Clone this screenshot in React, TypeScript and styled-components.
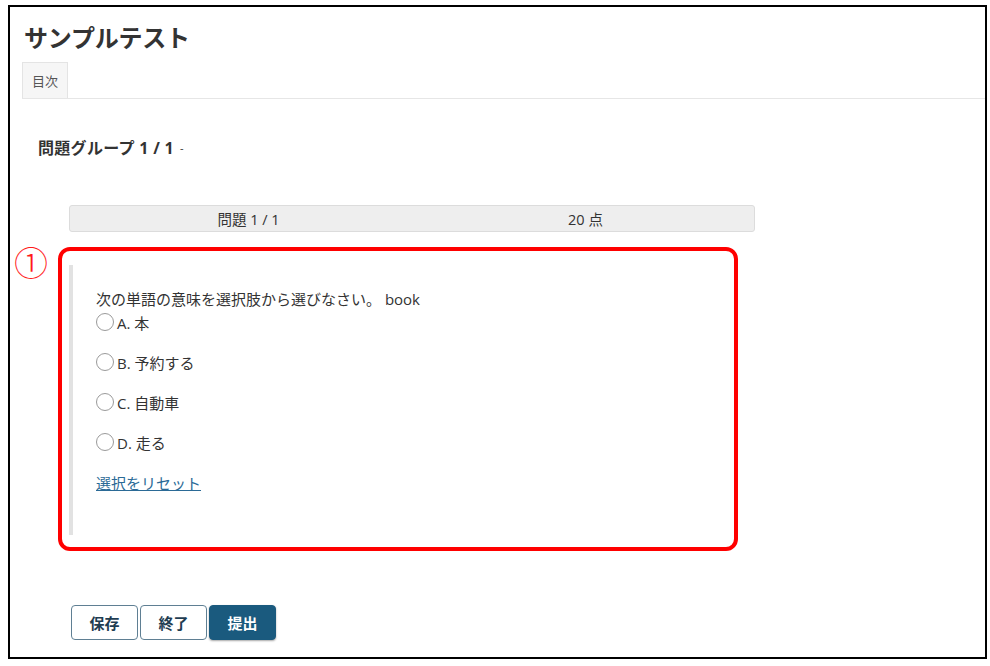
import React from "react";
import styled, { createGlobalStyle } from "styled-components";

const GlobalStyle = createGlobalStyle`
  html, body { margin: 0; padding: 0; background: #fff; }
  body {
    font-family: "Open Sans", "Noto Sans CJK JP", sans-serif;
    color: #333;
  }
  * { box-sizing: border-box; }
`;

const Frame = styled.div`
  margin: 5px 0 0 8px;
  width: 979px;
  height: 654px;
  border: 2px solid #000;
  display: flex;
  flex-direction: column;
  overflow: hidden;
`;

const Title = styled.h1`
  margin: 16px 0 0 14px;
  height: 30px;
  font-size: 24px;
  line-height: 30px;
  font-weight: 700;
  color: #333;
  letter-spacing: -0.2px;
`;

const TabBar = styled.div`
  margin: 9px 0 0 12px;
  display: flex;
  border-bottom: 1px solid #e6e6e6;
`;

const Tab = styled.div`
  height: 36px;
  padding: 0 9px;
  display: flex;
  align-items: center;
  font-size: 13px;
  color: #555;
  background: #f6f6f6;
  border: 1px solid #e4e4e4;
  border-bottom: none;
`;

const GroupHeading = styled.h2`
  margin: 38px 0 0 28px;
  height: 20px;
  display: flex;
  align-items: center;
  font-size: 16px;
  font-weight: 700;
  color: #333;
  letter-spacing: 0.3px;
`;

const Dash = styled.span`
  font-weight: 400;
  font-size: 11px;
  margin-left: 6px;
`;

const QuestionHeader = styled.div`
  margin: 48px 0 0 59px;
  width: 686px;
  height: 27px;
  flex: none;
  display: flex;
  align-items: center;
  padding-left: 10px;
  background: #eeeeee;
  border: 1px solid #dcdcdc;
  border-radius: 3px;
  font-size: 14.5px;
  color: #333;
`;

const HeaderCell = styled.div`
  flex: 1;
  text-align: center;
`;

const AnnotatedRow = styled.div`
  margin-top: 15px;
  display: flex;
  align-items: flex-start;
  flex: none;
`;

const Marker = styled.div`
  width: 48px;
  height: 30px;
  padding-left: 4px;
  display: flex;
  align-items: center;
  font-family: "Noto Sans CJK JP", "DejaVu Serif", serif;
  font-size: 34px;
  line-height: 30px;
  color: #ff1a1a;
  font-weight: 300;
`;

const RedBox = styled.div`
  width: 680px;
  height: 304px;
  border: 4px solid #ff0000;
  border-radius: 12px;
  display: flex;
`;

const QuestionBody = styled.div`
  flex: 1;
  margin: 14px 0 12px 7px;
  border-left: 4px solid #e2e2e2;
  padding: 23px 0 0 23px;
  display: flex;
  flex-direction: column;
`;

const QuestionText = styled.div`
  height: 20px;
  margin-bottom: 4px;
  display: flex;
  align-items: center;
  font-size: 15px;
  color: #333;
  white-space: pre;
`;

const Options = styled.div`
  display: flex;
  flex-direction: column;
  gap: 20px;
`;

const Option = styled.label`
  display: flex;
  align-items: center;
  gap: 3px;
  height: 20px;
  font-size: 15px;
  color: #333;
  cursor: pointer;
`;

const Radio = styled.span`
  width: 18px;
  height: 18px;
  border-radius: 50%;
  border: 1px solid #9a9a9a;
  background: #fff;
  display: inline-block;
`;

const ResetLink = styled.a`
  margin-top: 20px;
  height: 20px;
  display: flex;
  align-items: center;
  font-size: 15px;
  color: #2b6a96;
  text-decoration: underline;
  align-self: flex-start;
  cursor: pointer;
`;

const ButtonRow = styled.div`
  margin: 54px 0 0 61px;
  display: flex;
  gap: 2px;
`;

const Button = styled.button<{ $primary?: boolean }>`
  width: 67px;
  height: 35px;
  border-radius: 4px;
  font-family: "Noto Sans CJK JP", sans-serif;
  font-size: 15px;
  font-weight: 700;
  cursor: pointer;
  border: 1px solid ${(p) => (p.$primary ? "#1a5a7e" : "#5f7f93")};
  background: ${(p) => (p.$primary ? "#1a5a7e" : "#fff")};
  color: ${(p) => (p.$primary ? "#fff" : "#1f3d52")};
  box-shadow: ${(p) => (p.$primary ? "0 1px 2px rgba(0,0,0,0.35)" : "none")};
`;

const options = ["A. 本", "B. 予約する", "C. 自動車", "D. 走る"];

export default function App() {
  return (
    <>
      <GlobalStyle />
      <Frame>
        <Title>サンプルテスト</Title>
        <TabBar>
          <Tab>目次</Tab>
        </TabBar>
        <GroupHeading>
          問題グループ 1 / 1<Dash>-</Dash>
        </GroupHeading>
        <QuestionHeader>
          <HeaderCell>問題 1 / 1</HeaderCell>
          <HeaderCell>20 点</HeaderCell>
        </QuestionHeader>
        <AnnotatedRow>
          <Marker>①</Marker>
          <RedBox>
            <QuestionBody>
              <QuestionText>次の単語の意味を選択肢から選びなさい。 book</QuestionText>
              <Options>
                {options.map((o) => (
                  <Option key={o}>
                    <Radio />
                    {o}
                  </Option>
                ))}
              </Options>
              <ResetLink>選択をリセット</ResetLink>
            </QuestionBody>
          </RedBox>
        </AnnotatedRow>
        <ButtonRow>
          <Button>保存</Button>
          <Button>終了</Button>
          <Button $primary>提出</Button>
        </ButtonRow>
      </Frame>
    </>
  );
}
